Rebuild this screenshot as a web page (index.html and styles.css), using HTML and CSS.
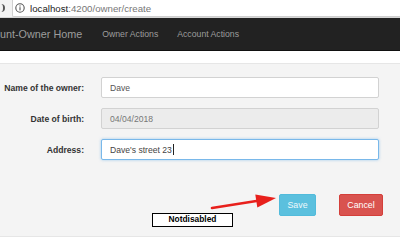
FILE: index.html
```html
<!doctype html>
<html lang="en">
  <head>
    <meta charset="UTF-8" />
    <meta name="viewport" content="width=device-width, initial-scale=1.0" />
    <title>Create owner</title>
    <link rel="stylesheet" href="styles.css">
  </head>
  <body>
    <div class="addressbar">
      <div class="reload"></div>
      <div class="url">
        <svg class="info" width="10" height="10" viewBox="0 0 10 10">
          <circle cx="5" cy="5" r="4.2" fill="none" stroke="#555" stroke-width="1.1" />
          <rect x="4.45" y="4.2" width="1.1" height="3.2" fill="#555" />
          <rect x="4.45" y="2.4" width="1.1" height="1.1" fill="#555" />
        </svg>
        <span class="host">localhost</span><span class="path">:4200/owner/create</span>
      </div>
    </div>

    <nav class="navbar">
      <span class="brand">unt-Owner Home</span>
      <a class="nav-link">Owner Actions</a>
      <a class="nav-link">Account Actions</a>
    </nav>

    <div class="well">
      <div class="form">
        <div class="label">Name of the owner:</div>
        <div class="field">Dave</div>
        <div class="label">Date of birth:</div>
        <div class="field disabled">04/04/2018</div>
        <div class="label">Address:</div>
        <div class="field focused">Dave's street 23<span class="caret"></span></div>
      </div>
      <div class="actions">
        <button class="btn btn-info">Save</button>
        <button class="btn btn-danger">Cancel</button>
      </div>
    </div>

    <!-- annotation drawn over the screenshot -->
    <svg class="arrow" width="400" height="250" viewBox="0 0 400 250">
      <line x1="212" y1="208" x2="258" y2="200.8" stroke="#e8201c" stroke-width="2.6" stroke-linecap="round" />
      <polygon points="276,198 255.3,194.6 257.3,207.4" fill="#e8201c" />
    </svg>
    <div class="note">Notdisabled</div>
  </body>
</html>
```

FILE: styles.css
```css
body {
  margin: 0;
  background-color: #fff;
  font-family: "Liberation Sans", Arial, sans-serif;
  color: #333;
  overflow: hidden;
}

.addressbar {
  display: flex;
  height: 17px;
  background-color: #f2f2f2;
  border-bottom: 1px solid #d6d6d6;
}

.reload {
  width: 3px;
  height: 8px;
  margin: 4px 7px 0 0;
  border-right: 2px solid #555;
  border-radius: 0 4px 4px 0;
}

.url {
  flex: 1;
  display: flex;
  align-items: center;
  background-color: #fff;
  border: 1px solid #cfcfcf;
  border-top: none;
  border-right: none;
  border-radius: 0 0 0 2px;
  padding-left: 2px;
  font-size: 9.7px;
}

.info {
  margin-right: 5px;
}

.host {
  color: #222;
}

.path {
  color: #777;
}

.navbar {
  display: flex;
  align-items: center;
  height: 32px;
  background-color: #222;
  border-bottom: 1px solid #111;
  color: #9d9d9d;
  white-space: nowrap;
}

.brand {
  margin-left: 0;
  margin-right: 10.5px;
  font-size: 10.8px;
}

.nav-link {
  padding: 0 9.5px;
  font-size: 8.7px;
}

.well {
  margin-top: 12px;
  padding: 13px 0 20px;
  background-color: #f4f4f4;
  border-top: 1px solid #e6e6e6;
  border-bottom: 1px solid #e6e6e6;
}

.form {
  display: grid;
  grid-template-columns: 84px 278px;
  grid-auto-rows: 21px;
  column-gap: 17px;
  row-gap: 10px;
}

.label {
  display: flex;
  align-items: center;
  justify-content: flex-end;
  font-size: 8.6px;
  font-weight: bold;
  color: #333;
  white-space: nowrap;
}

.field {
  display: flex;
  align-items: center;
  box-sizing: border-box;
  padding: 0 8px;
  background-color: #fff;
  border: 1px solid #d2d2d2;
  border-radius: 2px;
  font-size: 8.6px;
  color: #555;
}

.field.disabled {
  background-color: #ececec;
  color: #777;
}

.field.focused {
  border-color: #79b8ea;
  box-shadow: 0 0 3px rgba(102, 175, 233, 0.6);
  color: #444;
}

.caret {
  width: 1px;
  height: 11px;
  margin-left: 1px;
  background-color: #222;
}

.actions {
  display: flex;
  gap: 23px;
  margin-top: 34px;
  margin-left: 279px;
}

.btn {
  height: 22px;
  padding: 0;
  border-radius: 2px;
  font-family: "Liberation Sans", Arial, sans-serif;
  font-size: 8.8px;
  color: #fff;
  border: 1px solid transparent;
}

.btn-info {
  width: 37px;
  background-color: #5bc0de;
  border-color: #52bbdb;
  color: #eef9fc;
}

.btn-danger {
  width: 44px;
  background-color: #d9534f;
  border-color: #d43f3a;
}

.arrow {
  position: absolute;
  left: 0;
  top: 0;
  pointer-events: none;
}

.note {
  position: absolute;
  left: 152px;
  top: 213px;
  box-sizing: border-box;
  width: 81px;
  height: 14px;
  border: 1.5px solid #000;
  background-color: #fff;
  font-size: 8.4px;
  font-weight: bold;
  color: #000;
  text-align: center;
  line-height: 11px;
}
```
